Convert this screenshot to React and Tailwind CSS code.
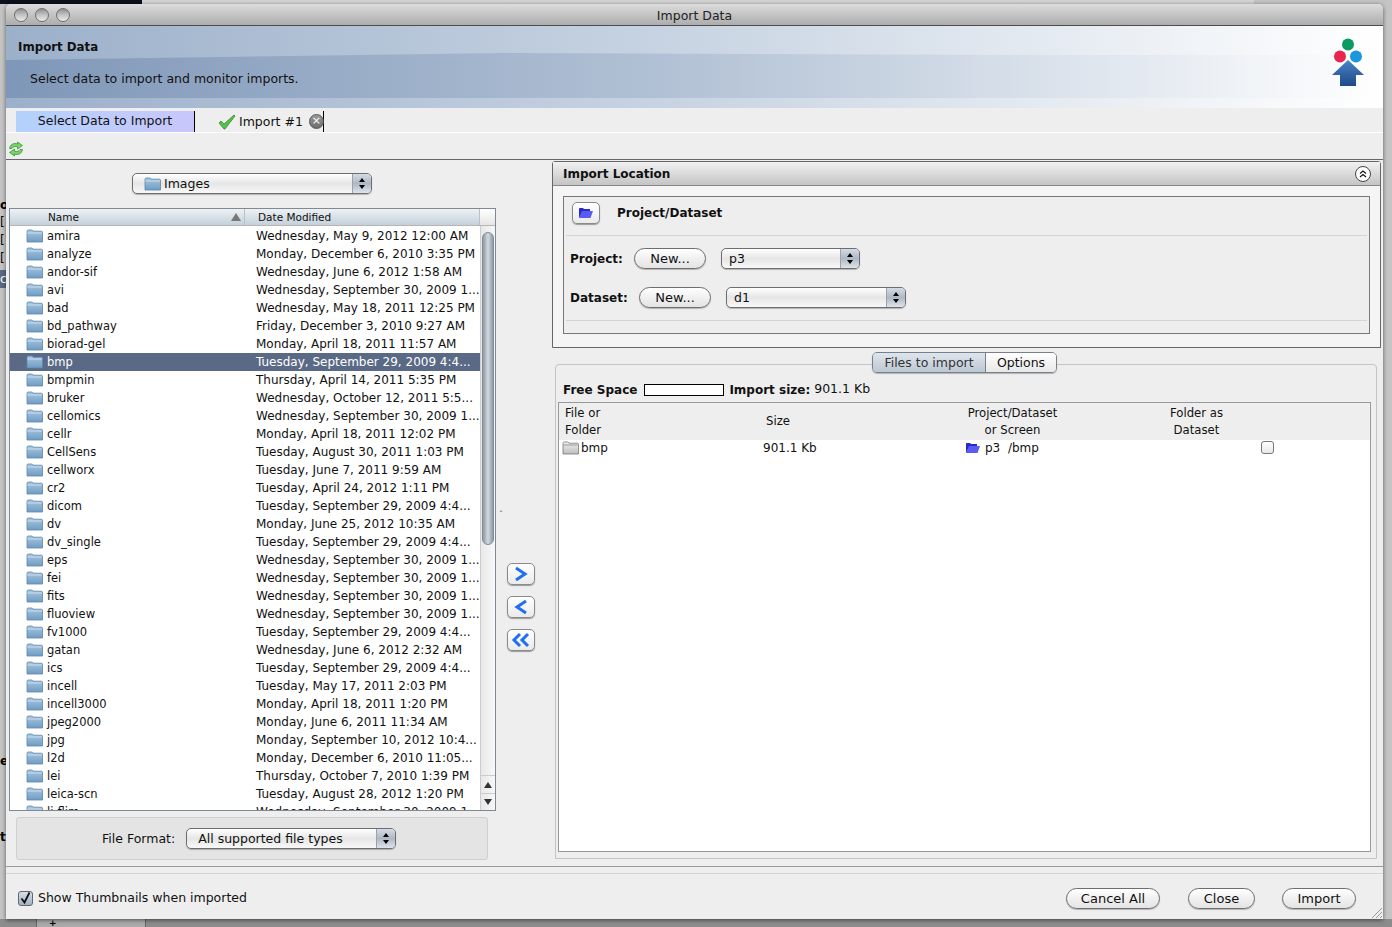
const rows = [
  ["amira", "Wednesday, May 9, 2012 12:00 AM"],
  ["analyze", "Monday, December 6, 2010 3:35 PM"],
  ["andor-sif", "Wednesday, June 6, 2012 1:58 AM"],
  ["avi", "Wednesday, September 30, 2009 1..."],
  ["bad", "Wednesday, May 18, 2011 12:25 PM"],
  ["bd_pathway", "Friday, December 3, 2010 9:27 AM"],
  ["biorad-gel", "Monday, April 18, 2011 11:57 AM"],
  ["bmp", "Tuesday, September 29, 2009 4:4..."],
  ["bmpmin", "Thursday, April 14, 2011 5:35 PM"],
  ["bruker", "Wednesday, October 12, 2011 5:5..."],
  ["cellomics", "Wednesday, September 30, 2009 1..."],
  ["cellr", "Monday, April 18, 2011 12:02 PM"],
  ["CellSens", "Tuesday, August 30, 2011 1:03 PM"],
  ["cellworx", "Tuesday, June 7, 2011 9:59 AM"],
  ["cr2", "Tuesday, April 24, 2012 1:11 PM"],
  ["dicom", "Tuesday, September 29, 2009 4:4..."],
  ["dv", "Monday, June 25, 2012 10:35 AM"],
  ["dv_single", "Tuesday, September 29, 2009 4:4..."],
  ["eps", "Wednesday, September 30, 2009 1..."],
  ["fei", "Wednesday, September 30, 2009 1..."],
  ["fits", "Wednesday, September 30, 2009 1..."],
  ["fluoview", "Wednesday, September 30, 2009 1..."],
  ["fv1000", "Tuesday, September 29, 2009 4:4..."],
  ["gatan", "Wednesday, June 6, 2012 2:32 AM"],
  ["ics", "Tuesday, September 29, 2009 4:4..."],
  ["incell", "Tuesday, May 17, 2011 2:03 PM"],
  ["incell3000", "Monday, April 18, 2011 1:20 PM"],
  ["jpeg2000", "Monday, June 6, 2011 11:34 AM"],
  ["jpg", "Monday, September 10, 2012 10:4..."],
  ["l2d", "Monday, December 6, 2010 11:05..."],
  ["lei", "Thursday, October 7, 2010 1:39 PM"],
  ["leica-scn", "Tuesday, August 28, 2012 1:20 PM"],
  ["li-flim", "Wednesday, September 30, 2009 1..."],
];

const FolderIcon = ({ gray }) => (
  <svg width="17" height="14" viewBox="0 0 17 14" className="shrink-0">
    <defs>
      <linearGradient id="fb" x1="0" y1="0" x2="0" y2="1">
        <stop offset="0" stopColor="#a9c6de" />
        <stop offset="1" stopColor="#6f9dc4" />
      </linearGradient>
      <linearGradient id="fg" x1="0" y1="0" x2="0" y2="1">
        <stop offset="0" stopColor="#f0f0f0" />
        <stop offset="1" stopColor="#bdbdbd" />
      </linearGradient>
    </defs>
    <path
      d="M1 13V2.500C1 1.700 1.500 1 2.300 1h3.400c.7 0 1 .4 1.300 1.200h8.500c.5 0 1 .5 1 1V13z"
      fill={gray ? "url(#fg)" : "url(#fb)"}
      stroke={gray ? "#777" : "#5b87ab"}
      strokeWidth="0.8"
    />
    <path d="M1.300 4h14.400" stroke={gray ? "#999" : "#c9deee"} strokeWidth="1" />
  </svg>
);

const BlueFolder = () => (
  <svg width="16" height="12" viewBox="0 0 16 12">
    <path d="M1 11V2c0-.6.4-1 1-1h3l1 1h6v2H5z" fill="#2a2ac8" />
    <path d="M1 11l3-7h11l-2.500 7z" fill="#5a5af5" />
  </svg>
);

const Arrows = ({ left, double }) => (
  <svg width="20" height="16" viewBox="0 0 20 16" fill="none" stroke="#1f6ff0" strokeWidth="3">
    {double ? (
      <>
        <path d="M9 2L3 8l6 6" />
        <path d="M17 2l-6 6 6 6" />
      </>
    ) : left ? (
      <path d="M15 2L6 8l9 6" />
    ) : (
      <path d="M5 2l9 6-9 6" />
    )}
  </svg>
);

const Spinner = () => (
  <div className="w-[19px] self-stretch shrink-0 flex flex-col items-center justify-center gap-[3px] rounded-r-[4px] border-l border-[#9aa3ad] bg-gradient-to-b from-[#d5dbe3] via-[#aeb8c4] to-[#dfe4ea]">
    <span className="w-0 h-0 border-x-[3px] border-x-transparent border-b-[4px] border-b-black" />
    <span className="w-0 h-0 border-x-[3px] border-x-transparent border-t-[4px] border-t-black" />
  </div>
);

const Combo = ({ className, children }) => (
  <div
    className={`flex items-center h-[21px] rounded-[5px] border border-[#6e6e6e] bg-gradient-to-b from-white via-[#e6e6e6] to-[#f8f8f8] shadow-[0_1px_1px_rgba(0,0,0,0.25)] ${className}`}
  >
    <div className="flex-1 flex items-center min-w-0 pt-[1px] text-[12.5px] text-[#111]">{children}</div>
    <Spinner />
  </div>
);

const Pill = ({ className, children }) => (
  <div
    className={`flex items-center justify-center h-[21px] rounded-full border border-[#6e6e6e] bg-gradient-to-b from-white via-[#f0f0f0] to-[#e4e4e4] text-[13px] text-[#111] shadow-[0_1px_1px_rgba(0,0,0,0.25)] ${className}`}
  >
    {children}
  </div>
);

const IconBtn = ({ className, children }) => (
  <div
    className={`flex items-center justify-center rounded-[5px] border border-[#8a8a8a] bg-gradient-to-b from-white to-[#eaeaea] shadow-[0_1px_1px_rgba(0,0,0,0.35)] ${className}`}
  >
    {children}
  </div>
);

const Light = () => (
  <span className="w-[14px] h-[14px] rounded-full border border-[#6f6f6f] bg-gradient-to-b from-[#8f8f8f] via-[#c4c4c4] to-[#ececec]" />
);

export default function App() {
  return (
    <div
      className="relative w-[1392px] h-[927px] overflow-hidden bg-[#c4c4c4] pt-[4px] pl-[6px]"
      style={{ fontFamily: '"DejaVu Sans", sans-serif' }}
    >
      {/* windows behind the dialog */}
      <div className="absolute left-0 top-0 w-[142px] h-[4px] bg-[#0c0f1c]" />
      <div className="absolute left-[142px] top-0 w-[1112px] h-[4px] bg-[#d4d4d4]" />
      <div className="absolute left-0 bottom-0 w-[1392px] h-[8px] bg-[#8c8c8c]" />
      <div className="absolute left-[36px] bottom-0 w-[110px] h-[8px] border-x border-[#666] bg-[#aaaaaa] text-[9px] leading-[8px] pl-[12px] font-bold">
        +
      </div>
      <div className="absolute left-0 top-[196px] text-[12px] leading-[18px] font-bold">o</div>
      <div className="absolute left-0 top-[213px] text-[12px] leading-[18px]">[</div>
      <div className="absolute left-0 top-[231px] text-[12px] leading-[18px]">[</div>
      <div className="absolute left-0 top-[249px] text-[12px] leading-[18px]">[</div>
      <div className="absolute left-0 top-[270px] w-[6px] h-[18px] bg-[#5a6a86] text-white text-[12px] leading-[18px]">c</div>
      <div className="absolute left-0 top-[752px] text-[12px] leading-[18px] font-bold">e</div>
      <div className="absolute left-0 top-[828px] text-[12px] leading-[18px] font-bold">t</div>

      <div className="relative w-[1377px] h-[915px] flex flex-col bg-[#eeeeee] rounded-t-[5px] shadow-[0_1px_4px_rgba(0,0,0,0.55)] overflow-hidden text-[#111]">
        {/* title bar */}
        <div className="relative h-[22px] shrink-0 flex items-center gap-[7px] pl-[8px] border-b border-[#4d4d4d] bg-gradient-to-b from-[#dcdcdc] to-[#adadad]">
          <Light />
          <Light />
          <Light />
          <span className="absolute left-0 right-0 top-[3px] text-center text-[12.5px] text-[#222]">Import Data</span>
        </div>

        {/* banner */}
        <div className="relative h-[82px] shrink-0 bg-gradient-to-r from-[#9cb0ca] via-[#c9d5e3] to-white">
          <div
            className="absolute left-0 right-0 bottom-[10px] h-[45px] bg-gradient-to-r from-[#7f97b8] via-[#b4c3d6] to-white"
            style={{ clipPath: "polygon(0 7px, 36% 0, 72% 2px, 100% 2px, 100% 100%, 0 100%)" }}
          />
          <div className="absolute inset-0 pl-[12px] pt-[13px] flex flex-col">
            <span className="text-[11.8px] font-bold leading-[16px]">Import Data</span>
            <span className="mt-[16px] pl-[12px] text-[12.5px] leading-[16px]">
              Select data to import and monitor imports.
            </span>
          </div>
          <svg width="34" height="50" viewBox="0 0 34 50" className="absolute right-[18px] top-[12px]">
            <defs>
              <linearGradient id="up" x1="0" y1="0" x2="0" y2="1">
                <stop offset="0" stopColor="#4a83c8" />
                <stop offset="1" stopColor="#1e4a87" />
              </linearGradient>
            </defs>
            <circle cx="17" cy="6.500" r="6" fill="#0c9b62" />
            <circle cx="9" cy="18.500" r="6" fill="#e8264f" />
            <circle cx="25" cy="18.500" r="6" fill="#1a97dd" />
            <path d="M17 22l16 15H25v11H9V37H1z" fill="url(#up)" />
          </svg>
        </div>

        {/* tabs */}
        <div className="h-[25px] shrink-0 flex items-end pl-[10px] border-b border-white">
          <div className="w-[179px] h-[21px] flex items-center justify-center border-r border-black bg-gradient-to-r from-[#b3d2fb] to-[#c9c6fb] text-[12.5px]">
            <span className="-mt-[1px]">Select Data to Import</span>
          </div>
          <div className="w-[129px] h-[21px] flex items-center border-r border-black pl-[23px] text-[12.5px] whitespace-nowrap">
            <svg width="18" height="16" viewBox="0 0 18 16" className="shrink-0 mt-[1px]">
              <path d="M1 9l2-2 3 3 10-9 1 1L7 15H6z" fill="#55c24a" stroke="#2c7a28" strokeWidth="0.7" />
            </svg>
            <span className="ml-[3px] pt-[2px]">Import #1</span>
            <span className="ml-[6px] w-[15px] h-[15px] shrink-0 rounded-full bg-gradient-to-b from-[#9a9a9a] to-[#6e6e6e] border border-[#555] text-white text-[11px] leading-[12px] text-center">
              ×
            </span>
          </div>
        </div>

        {/* toolbar */}
        <div className="h-[27px] shrink-0 flex items-center pl-[2px] pt-[6px] border-b border-[#666]">
          <svg width="16" height="16" viewBox="0 0 16 16">
            <path d="M1.500 7.500C2 3.500 6 1.500 9.500 3V1l5 3.500-5 3.500V5.800C7 5 5 5.500 4 7.500z" fill="#7ad36a" stroke="#2f8a2a" strokeWidth="0.7" />
            <path d="M14.500 8.500C14 12.500 10 14.500 6.500 13v2l-5-3.500 5-3.500v2.200c2.500.8 4.500.3 5.500-1.700z" fill="#7ad36a" stroke="#2f8a2a" strokeWidth="0.7" />
          </svg>
        </div>

        {/* main */}
        <div className="h-[707px] shrink-0 flex border-b border-[#9a9a9a]">
          {/* file chooser */}
          <div className="w-[490px] shrink-0 flex flex-col">
            <Combo className="w-[240px] ml-[126px] mt-[13px] shrink-0">
              <div className="ml-[11px]">
                <FolderIcon />
              </div>
              <span className="ml-[3px]">Images</span>
            </Combo>
            <div className="ml-[3px] mt-[14px] w-[487px] h-[603px] shrink-0 flex flex-col border border-[#7d8a96] bg-white overflow-hidden">
              <div className="h-[17px] shrink-0 flex text-[10.5px] leading-[15px] border-b border-[#b5b5b5] bg-gradient-to-b from-[#eef2f5] to-[#c4d0da]">
                <div className="w-[235px] shrink-0 flex items-center pl-[38px] pr-[3px] border-r border-[#c0c0c0]">
                  <span className="flex-1">Name</span>
                  <span className="w-0 h-0 border-x-[5px] border-x-transparent border-b-[8px] border-b-[#777]" />
                </div>
                <div className="w-[235px] shrink-0 pl-[13px] flex items-center border-r border-[#c0c0c0]">Date Modified</div>
                <div className="flex-1 bg-gradient-to-b from-white to-[#e6e6e6]" />
              </div>
              <div className="flex-1 min-h-0 flex">
                <div className="w-[470px] shrink-0 overflow-hidden pt-[1px]">
                  {rows.map(([name, date]) => (
                    <div
                      key={name}
                      className={`h-[18px] flex items-center text-[12px] ${name === "bmp" ? "bg-[#5a6a86] text-white" : ""}`}
                    >
                      <div className="w-[235px] shrink-0 flex items-center pl-[16px]">
                        <FolderIcon />
                        <span className="ml-[4px] pt-[1px] text-[11.5px]">{name}</span>
                      </div>
                      <span className="pl-[11px] whitespace-nowrap">{date}</span>
                    </div>
                  ))}
                </div>
                {/* scrollbar */}
                <div className="flex-1 flex flex-col bg-gradient-to-r from-[#e8e8e8] to-[#f8f8f8] border-l border-[#ccc]">
                  <div className="mt-[6px] h-[313px] mx-[1px] rounded-full border border-[#7f8c99] bg-gradient-to-r from-[#8d99a5] via-[#d3dae0] to-[#8d99a5]" />
                  <div className="flex-1" />
                  <div className="h-[18px] flex items-center justify-center border-t border-[#ccc]">
                    <span className="w-0 h-0 border-x-[4px] border-x-transparent border-b-[6px] border-b-[#333]" />
                  </div>
                  <div className="h-[17px] flex items-center justify-center border-t border-[#ccc]">
                    <span className="w-0 h-0 border-x-[4px] border-x-transparent border-t-[6px] border-t-[#333]" />
                  </div>
                </div>
              </div>
            </div>
            <div className="ml-[10px] mt-[6px] w-[472px] h-[43px] shrink-0 flex items-center rounded-[3px] border border-[#cfcfcf] bg-[#e4e4e4] pl-[85px]">
              <span className="text-[12.5px] pt-[1px]">File Format:</span>
              <Combo className="w-[210px] ml-[11px]">
                <span className="ml-[11px]">All supported file types</span>
              </Combo>
            </div>
          </div>

          {/* move buttons */}
          <div className="relative w-[56px] shrink-0 flex flex-col items-start pl-[11px] pt-[403px] gap-[5px]">
            <span className="absolute left-[3px] top-[352px] text-[8px] leading-none text-[#555]">ˆ</span>
            <IconBtn className="w-[28px] h-[22px]">
              <Arrows />
            </IconBtn>
            <IconBtn className="w-[28px] h-[22px] mt-[6px]">
              <Arrows left />
            </IconBtn>
            <IconBtn className="w-[28px] h-[22px] mt-[6px]">
              <Arrows left double />
            </IconBtn>
          </div>

          {/* right column */}
          <div className="flex-1 min-w-0 flex flex-col">
            <div className="relative w-[829px] h-[187px] shrink-0 mt-[1px] border border-[#666] rounded-t-[3px] bg-[#f5f5f5]">
              <div className="h-[24px] flex items-center justify-between pl-[10px] pr-[9px] border-b border-[#888] bg-gradient-to-b from-[#f2f2f2] to-[#c4c4c4]">
                <span className="text-[12px] font-bold">Import Location</span>
                <span className="w-[16px] h-[16px] rounded-full border border-[#444] bg-white flex items-center justify-center">
                  <svg width="10" height="10" viewBox="0 0 10 10" fill="none" stroke="#111" strokeWidth="1.100">
                    <path d="M2 4.500L5 2l3 2.500M2 8l3-2.500L8 8" />
                  </svg>
                </span>
              </div>
              <div className="mx-[10px] mt-[10px] h-[138px] border border-[#777] bg-[#eeeeee] px-[2px]">
                <div className="h-[39px] flex items-center border-b border-[#d4d4d4] pl-[6px] pb-[6px]">
                  <IconBtn className="w-[28px] h-[22px]">
                    <BlueFolder />
                  </IconBtn>
                  <span className="ml-[17px] text-[12px] font-bold">Project/Dataset</span>
                </div>
                <div className="h-[85px] border-b border-[#d4d4d4] pl-[4px] flex flex-col">
                  <div className="flex items-center mt-[12px]">
                    <span className="text-[12px] font-bold w-[64px] pt-[1px]">Project:</span>
                    <Pill className="w-[72px]">New...</Pill>
                    <Combo className="w-[139px] ml-[15px]">
                      <span className="ml-[7px]">p3</span>
                    </Combo>
                  </div>
                  <div className="flex items-center mt-[18px]">
                    <span className="text-[12px] font-bold w-[69px] pt-[1px]">Dataset:</span>
                    <Pill className="w-[72px]">New...</Pill>
                    <Combo className="w-[180px] ml-[15px]">
                      <span className="ml-[7px]">d1</span>
                    </Combo>
                  </div>
                </div>
              </div>
            </div>

            <div className="relative ml-[3px] mt-[16px] w-[822px] h-[495px] shrink-0 border border-[#c4c4c4] rounded-t-[4px] bg-[#eeeeee] pt-[13px] px-[2px]">
              {/* tab switch sits on the panel's edge */}
              <div className="absolute left-[316px] -top-[13px] flex h-[21px] text-[12.5px] rounded-[5px] border border-[#77818c] shadow-[0_1px_1px_rgba(0,0,0,0.25)] overflow-hidden">
                <div className="w-[113px] flex items-center justify-center pt-[1px] bg-gradient-to-b from-[#dfe5ec] to-[#bcc7d3] border-r border-[#77818c] text-[#333]">
                  Files to import
                </div>
                <div className="w-[70px] flex items-center justify-center pt-[1px] bg-gradient-to-b from-white to-[#e8e8e8]">Options</div>
              </div>
              <div className="h-[23px] flex items-center pl-[5px] text-[12px]">
                <span className="font-bold">Free Space</span>
                <span className="ml-[7px] w-[80px] h-[12px] border border-black bg-white" />
                <span className="ml-[5px] font-bold">Import size:</span>
                <span className="ml-[4px] text-[12.5px]">901.1 Kb</span>
              </div>
              <div className="w-[813px] h-[450px] mt-[1px] border border-[#999] bg-white">
                <div className="h-[37px] flex text-[11.7px] leading-[17px] bg-[#eeeeee] pt-[2px]">
                  <div className="w-[207px] pl-[6px]">
                    File or
                    <br />
                    Folder
                  </div>
                  <div className="w-[198px] flex items-center pb-[2px]">Size</div>
                  <div className="w-[97px] text-center">
                    Project/Dataset
                    <br />
                    or Screen
                  </div>
                  <div className="w-[241px] text-center pl-[30px]">
                    Folder as
                    <br />
                    Dataset
                  </div>
                </div>
                <div className="h-[15px] flex items-center text-[12px]">
                  <div className="w-[204px] flex items-center pl-[3px]">
                    <FolderIcon gray />
                    <span className="ml-[2px]">bmp</span>
                  </div>
                  <div className="w-[202px]">901.1 Kb</div>
                  <div className="w-[296px] flex items-center">
                    <BlueFolder />
                    <span className="ml-[4px]">p3 &nbsp;/bmp</span>
                  </div>
                  <span className="w-[13px] h-[13px] rounded-[3px] border border-[#777] bg-gradient-to-b from-white to-[#e8e8e8]" />
                </div>
              </div>
            </div>
          </div>
        </div>

        {/* footer */}
        <div className="relative flex-1 min-h-0 mt-[6px] border-t border-t-[#d4d4d4] flex items-center justify-between pl-[12px] pr-[27px] pt-[4px]">
          <label className="flex items-center text-[12.5px]">
            <span className="w-[15px] h-[15px] rounded-[3px] border border-[#666] bg-gradient-to-b from-[#d6e0ea] to-[#9fb2c4] flex items-center justify-center">
              <svg width="13" height="13" viewBox="0 0 13 13" fill="none" stroke="#111" strokeWidth="1.800">
                <path d="M2.500 6.500l3 4 5-10" />
              </svg>
            </span>
            <span className="ml-[5px]">Show Thumbnails when imported</span>
          </label>
          <div className="flex items-center gap-[28px]">
            <Pill className="w-[94px]">Cancel All</Pill>
            <div className="flex gap-[27px]">
              <Pill className="w-[67px]">Close</Pill>
              <Pill className="w-[74px]">Import</Pill>
            </div>
          </div>
          <svg width="12" height="12" viewBox="0 0 12 12" className="absolute right-0 bottom-0" stroke="#999" strokeWidth="1">
            <path d="M1 11l10-10M5 11l6-6M9 11l2-2" />
          </svg>
        </div>
      </div>
    </div>
  );
}
